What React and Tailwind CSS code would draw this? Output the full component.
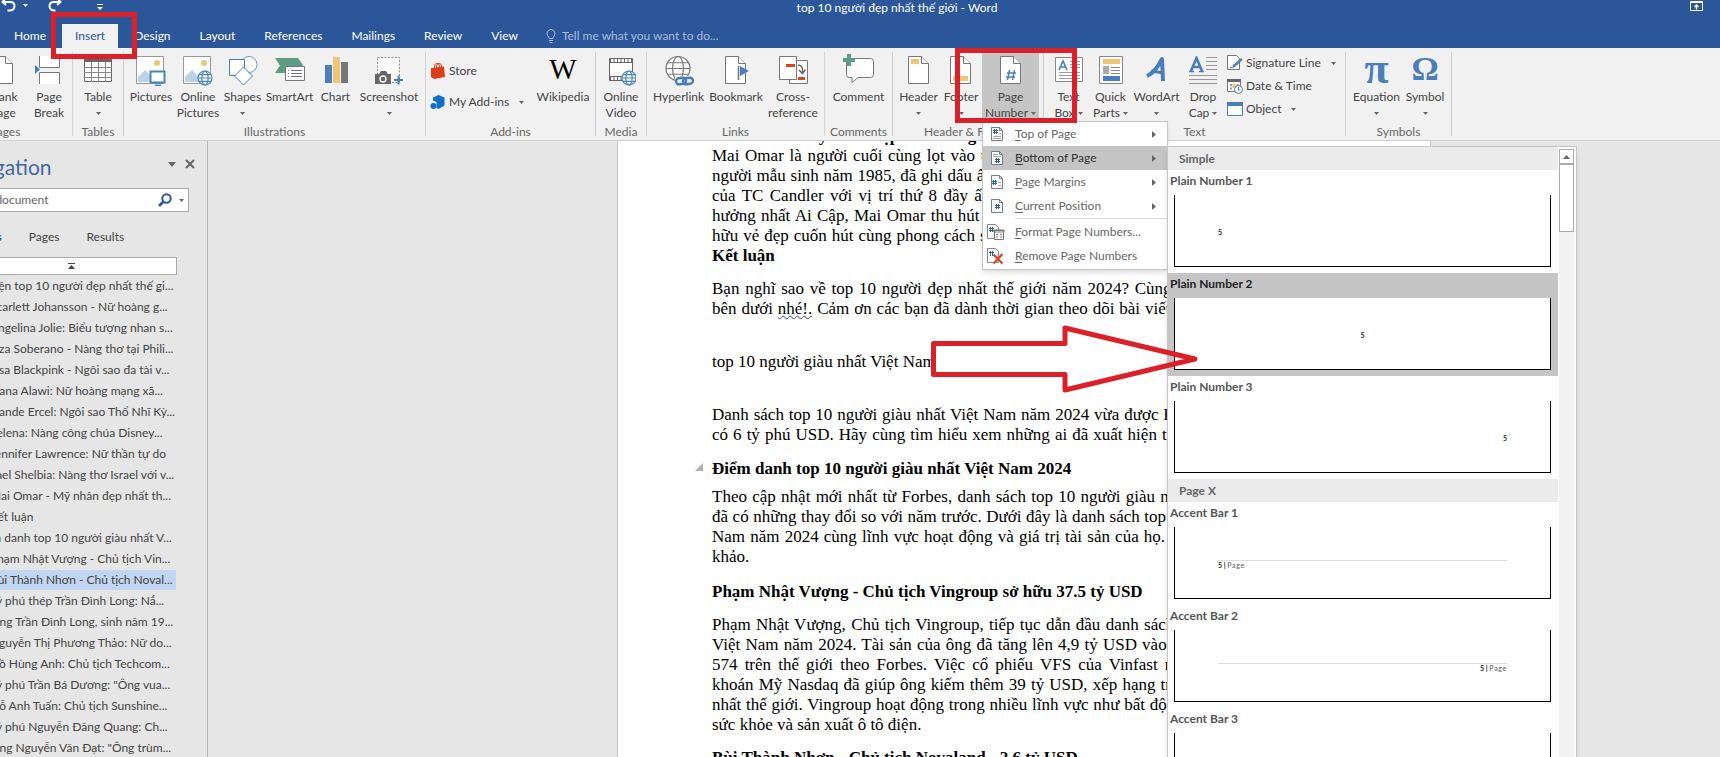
import React, { useState } from 'react';

const TABS = ['Home', 'Insert', 'Design', 'Layout', 'References', 'Mailings', 'Review', 'View'];

const HEADINGS = [
  { level: 1, text: 'Lộ diện top 10 người đẹp nhất thế gi...' },
  { level: 2, text: 'Scarlett Johansson - Nữ hoàng g...' },
  { level: 2, text: 'Angelina Jolie: Biểu tượng nhan s...' },
  { level: 2, text: 'Liza Soberano - Nàng thơ tại Phili...' },
  { level: 2, text: 'Lisa Blackpink - Ngôi sao đa tài v...' },
  { level: 2, text: 'Ivana Alawi: Nữ hoàng mạng xã...' },
  { level: 2, text: 'Hande Ercel: Ngôi sao Thổ Nhĩ Kỳ...' },
  { level: 2, text: 'Selena: Nàng công chúa Disney...' },
  { level: 2, text: 'Jennifer Lawrence: Nữ thần tự do' },
  { level: 2, text: 'Yael Shelbia: Nàng thơ Israel với v...' },
  { level: 2, text: 'Mai Omar - Mỹ nhân đẹp nhất th...' },
  { level: 2, text: 'Kết luận' },
  { level: 1, text: 'Điểm danh top 10 người giàu nhất V...' },
  { level: 2, text: 'Phạm Nhật Vượng - Chủ tịch Vin...' },
  { level: 2, text: 'Bùi Thành Nhơn - Chủ tịch Noval...' },
  { level: 2, text: 'Tỷ phú thép Trần Đình Long: Nắ...' },
  { level: 2, text: 'Ông Trần Đình Long, sinh năm 19...' },
  { level: 2, text: 'Nguyễn Thị Phương Thảo: Nữ do...' },
  { level: 2, text: 'Hồ Hùng Anh: Chủ tịch Techcom...' },
  { level: 2, text: 'Tỷ phú Trần Bá Dương: "Ông vua...' },
  { level: 2, text: 'Đỗ Anh Tuấn: Chủ tịch Sunshine...' },
  { level: 2, text: 'Tỷ phú Nguyễn Đăng Quang: Ch...' },
  { level: 2, text: 'Ông Nguyễn Văn Đạt: "Ông trùm...' },
];

const Caret = ({ className = 'text-[#666]' }) => (
  <svg className={`w-[5px] h-[3px] shrink-0 ${className}`} viewBox="0 0 5 3" fill="currentColor">
    <path d="M0 0h5L2.5 3z" />
  </svg>
);

const Icon = ({ children, className = 'w-[30px] h-[30px]', box = '0 0 30 30' }) => (
  <svg className={`shrink-0 ${className}`} viewBox={box} fill="none">
    {children}
  </svg>
);

const Sheet = ({ children }) => (
  <g transform="translate(-1 0)">
    <path d="M5.500 .5h13l7 7v20h-20z" fill="#fff" stroke="#777" />
    <path d="M18.500 .5v7h7" fill="#fff" stroke="#777" />
    {children}
  </g>
);

const Globe = ({ x, y, r, color }) => (
  <g transform={`translate(${x} ${y})`} stroke={color} fill="none" strokeWidth="1.2">
    <circle r={r} fill="#fff" />
    <ellipse rx={r * 0.45} ry={r} />
    <path d={`M${-r} 0h${2 * r}M${-r * 0.87} ${-r * 0.48}h${r * 1.74}M${-r * 0.87} ${r * 0.48}h${r * 1.74}`} />
  </g>
);

const Photo = () => (
  <>
    <path d="M.5 .5h27v27h-27z" fill="#fff" stroke="#999" />
    <circle cx="21" cy="7" r="3" fill="#eec577" />
    <path d="M2 26v-5l7-7 5 5 3-2 2 2v7z" fill="#bdd0e6" />
  </>
);

const icons = {
  cover: (
    <Icon><Sheet><path d="M9 12h13v8H9z" fill="#4a7ebb" /></Sheet></Icon>
  ),
  blank: (
    <Icon><Sheet /></Icon>
  ),
  pageBreak: (
    <Icon>
      <path d="M5.500 0v11.500h20V0M5.500 28V16.500h20V28" fill="#fff" stroke="#777" />
      <path d="M1 9v9l5-4.500z" fill="#4a7ebb" />
    </Icon>
  ),
  table: (
    <Icon>
      <path d="M1.500 2.500h27v23h-27z" fill="#fff" stroke="#666" />
      <path d="M1 2h28v4H1z" fill="#666" />
      <path d="M1 11.500h28M1 16.500h28M1 21.500h28M8.500 6v20M15.500 6v20M22.500 6v20" stroke="#888" />
    </Icon>
  ),
  pictures: (
    <Icon>
      <Photo />
      <path d="M14.500 15.500h14v11h-14z" fill="#fff" stroke="#4a84bd" strokeWidth="2" />
      <path d="M19 29.300h6" stroke="#4a84bd" strokeWidth="1.500" />
    </Icon>
  ),
  onlinePictures: (
    <Icon><Photo /><Globe x={22} y={22} r={7} color="#4a84bd" /></Icon>
  ),
  shapes: (
    <Icon>
      <circle cx="21" cy="8.500" r="8" fill="#fff" stroke="#6c96c4" />
      <path d="M1.500 3.500h15v16h-15z" fill="#fff" stroke="#4a7ebb" />
      <path d="M15.500 11l9 9-9 9-9-9z" fill="#fff" stroke="#4a7ebb" />
    </Icon>
  ),
  smartArt: (
    <Icon>
      <path d="M0 2h23l5 7-5 8H0l5-7.500z" fill="#5c9d84" />
      <path d="M10.500 10.500h19v14h-19z" fill="#fff" stroke="#777" />
      <path d="M13 14.500h1M16 14.500h11M13 17.500h1M16 17.500h11M13 20.500h1M16 20.500h11" stroke="#777" />
    </Icon>
  ),
  chart: (
    <Icon>
      <path d="M4 9h7v18H4z" fill="#4a7ebb" />
      <path d="M12 1h7v26h-7z" fill="#eec577" />
      <path d="M20 6h7v21h-7z" fill="#777" />
    </Icon>
  ),
  screenshot: (
    <Icon>
      <path d="M3.500 1.500h22v25h-22z" fill="#fff" stroke="#888" strokeDasharray="2 1.500" />
      <path d="M1 18h4l2-3h5l2 3h3v10H1z" fill="#666" />
      <circle cx="9" cy="23" r="3" fill="#666" stroke="#fff" strokeWidth="1.400" />
      <path d="M20 24h9M24.500 19.500v9" stroke="#4a7ebb" strokeWidth="2" />
    </Icon>
  ),
  store: (
    <Icon className="w-4 h-4" box="0 0 16 16">
      <path d="M1 5l13-1.500 1 10.500L4 16 1 14z" fill="#dc3e15" />
      <path d="M4.500 6V3.500a2.500 2.500 0 015-1V5M6.500 5V3a2.500 2.500 0 015 0v2" stroke="#dc3e15" />
    </Icon>
  ),
  addins: (
    <Icon className="w-4 h-4" box="0 0 16 16">
      <path d="M8.500 1l6 2.500v8L8.500 15l-2-1V8L3 6.500v-3z" fill="#0f6fc6" />
      <circle cx="3.500" cy="12" r="3" fill="#0f6fc6" />
    </Icon>
  ),
  video: (
    <Icon>
      <path d="M3.500 2.500h23v22h-23z" fill="#fff" stroke="#666" />
      <path d="M4 4.500h22M4 22.500h12" stroke="#666" strokeWidth="3" strokeDasharray="1 2.500" />
      <path d="M4 6.500h22M4 20.500h12" stroke="#666" />
      <Globe x={23} y={22} r={7} color="#4a84bd" />
    </Icon>
  ),
  hyperlink: (
    <Icon>
      <Globe x={14} y={12.5} r={12} color="#777" />
      <path d="M11 20h19v10H11z" fill="#f1f1f1" />
      <g stroke="#4a7ebb" strokeWidth="2.400">
        <rect x="12" y="22" width="10" height="6" rx="3" transform="rotate(-8 17 25)" />
        <rect x="19" y="22" width="10" height="6" rx="3" transform="rotate(-8 24 25)" />
      </g>
    </Icon>
  ),
  bookmark: (
    <Icon>
      <Sheet>
        <path d="M18.500 10v14" stroke="#777" strokeWidth="1.600" />
        <path d="M20 10v10l9-5z" fill="#4a7ebb" />
      </Sheet>
    </Icon>
  ),
  crossRef: (
    <Icon>
      <path d="M11.500 4.500h18v23h-18z" fill="#fff" stroke="#777" />
      <path d="M1.500 .5h17v23h-17z" fill="#fff" stroke="#777" />
      <path d="M8 9.500h9M20 22.500h7" stroke="#d24726" strokeWidth="3" />
      <path d="M20 9c4 0 5 3 4.500 8M21 14l3.500 3.500 3-4" stroke="#666" strokeWidth="1.500" />
    </Icon>
  ),
  comment: (
    <Icon className="w-[30px] h-[30px] overflow-visible">
      <path d="M4.500 2.500h22q3 0 3 3v13q0 3-3 3H14l-6 5v-5H5q-2.500 0-2.500-3v-14z" fill="#fff" stroke="#777" />
      <path d="M5 -2v12M-1 4h12" stroke="#5c9d84" strokeWidth="4" />
    </Icon>
  ),
  header: (
    <Icon><Sheet><path d="M8 3h8v5H8z" fill="#eec577" /></Sheet></Icon>
  ),
  footer: (
    <Icon><Sheet><path d="M8 20h15v5H8z" fill="#eec577" /></Sheet></Icon>
  ),
  pageNumber: (
    <Icon>
      <Sheet>
        <path d="M14.500 14l-2 10M19.500 14l-2 10M12 17h9M11 21h9" stroke="#4a7ebb" strokeWidth="1.400" />
      </Sheet>
    </Icon>
  ),
  textBox: (
    <Icon>
      <path d="M1.500 1.500h27v24h-27z" fill="#fff" stroke="#888" />
      <path d="M16 5.500h10M16 8.500h10M16 11.500h10M5 16.500h21M5 19.500h21M5 22.500h21" stroke="#999" />
      <path d="M5 14l4-9 4 9M6.500 11h5" stroke="#4a7ebb" strokeWidth="1.600" />
    </Icon>
  ),
  quickParts: (
    <Icon>
      <path d="M3.500 .5h23v27h-23z" fill="#fff" stroke="#888" />
      <path d="M7 3h17v5H7z" fill="#eec577" />
      <path d="M7 10h6v8H7z" fill="#aaa" />
      <path d="M15 11.500h9M15 14.500h9M15 17.500h9" stroke="#888" />
      <path d="M7 20h17v5H7z" fill="#4a7ebb" />
    </Icon>
  ),
  wordArt: (
    <Icon>
      <path d="M5 20C12 17 17 9 20 3l1 22" stroke="#4a7ebb" strokeWidth="4" strokeLinejoin="round" />
      <path d="M9 15l13 2" stroke="#4a7ebb" strokeWidth="3" />
    </Icon>
  ),
  dropCap: (
    <Icon>
      <path d="M18 1.500h11M18 5.500h11M18 9.500h11M18 13.500h11M1 19.500h28M1 23.500h28M1 27.500h28" stroke="#999" />
      <path d="M3 15L8.500 2 14 15M5 11h7" stroke="#4a7ebb" strokeWidth="2.600" />
      <path d="M1 15.500h5M11 15.500h5" stroke="#4a7ebb" strokeWidth="1.400" />
    </Icon>
  ),
  signature: (
    <Icon className="w-4 h-4" box="0 0 16 16">
      <path d="M.5 .5h9l3 3v11h-12z" fill="#fff" stroke="#777" />
      <path d="M3 13l2-1" stroke="#555" />
      <path d="M5 13l1-3 8-7 1.500 2-7.500 7z" fill="#4a7ebb" />
    </Icon>
  ),
  dateTime: (
    <Icon className="w-4 h-4" box="0 0 16 16">
      <path d="M.5 1.500h13v12H.500z" fill="#fff" stroke="#777" />
      <path d="M0 1h14v3H0z" fill="#666" />
      <path d="M3 6h2v2H3zM3 9.500h2v2H3zM9.500 6h2v2h-2z" fill="#999" />
      <path d="M5.500 6h3v4h-3z" fill="#eec577" />
      <circle cx="11.500" cy="11.500" r="4" fill="#fff" stroke="#4a7ebb" />
      <path d="M11.500 9v3h2" stroke="#4a7ebb" />
    </Icon>
  ),
  object: (
    <Icon className="w-4 h-4" box="0 0 16 16">
      <path d="M.5 1.500h15v13H.500z" fill="#fff" stroke="#4a7ebb" />
      <path d="M0 1h16v4H0z" fill="#4a7ebb" />
    </Icon>
  ),
};

/* Serif letters used as ribbon pictures */
const Glyph = ({ children, className }) => (
  <span aria-hidden="true" className={`h-[30px] font-['Liberation_Serif',serif] leading-[26px] ${className}`}>{children}</span>
);

const RibbonButton = ({ icon, label, label2, caret, active, width }) => (
  <button
    type="button"
    className={`${width} h-[69px] pt-1 shrink-0 flex flex-col items-center whitespace-nowrap leading-4 ${active ? 'bg-[#c5c5c5]' : ''}`}
  >
    {icon}
    <span className="mt-[3px]">{label}</span>
    <span className="h-4 flex items-center gap-[3px]">
      {label2}
      {caret && <Caret />}
    </span>
  </button>
);

const Group = ({ name, children, className = '' }) => (
  <section className={`shrink-0 h-[89px] flex ${className}`}>
    <div className="flex-1 flex flex-col">
      <div className="h-[72px] flex justify-center">{children}</div>
      <h2 className="text-center leading-4 text-[#666] whitespace-nowrap">{name}</h2>
    </div>
    <div className="w-px h-[84px] bg-[#d2d2d2]" />
  </section>
);

const RowButton = ({ icon, label, caret }) => (
  <button type="button" className="flex items-center gap-[10px] whitespace-nowrap leading-4">
    <span className="flex items-center gap-[3px]">{icon}{label}</span>
    {caret && <Caret />}
  </button>
);

const TinyPage = ({ lines, hash }) => (
  <svg className="w-4 h-4 shrink-0" viewBox="0 0 16 16" fill="none">
    <path d="M2.500 1.500h8l3 3v10h-11z" fill="#fff" stroke="#6f7f90" />
    <path d="M10.500 1.500v3h3" stroke="#6f7f90" />
    <path d={lines} stroke="#aaa" />
    <g transform={hash} stroke="#2f6097">
      <path d="M1.500 0v5M3.500 0v5M0 1.500h5M0 3.500h5" />
    </g>
  </svg>
);

const MENU = [
  { key: 'T', rest: 'op of Page', icon: <TinyPage lines="M10 7.500h2M4 10.500h8M4 12.500h8" hash="translate(4 3)" /> },
  { key: 'B', rest: 'ottom of Page', icon: <TinyPage lines="M4 4.500h5M4 6.500h8" hash="translate(6 8)" />, open: true },
  { key: 'P', rest: 'age Margins', icon: <TinyPage lines="M9 8.500h3M9 11.500h3" hash="translate(3 6)" /> },
  { key: 'C', rest: 'urrent Position', icon: <TinyPage lines="" hash="translate(6 6)" /> },
];

const formatIcon = (
  <svg className="w-[18px] h-4 shrink-0" viewBox="0 0 18 16" fill="none">
    <path d="M.5 .5h8l3 3v11H.500z" fill="#fff" stroke="#888" />
    <path d="M3.500 3v5M5.500 3v5M2 4.500h5M2 6.500h5" stroke="#2f6097" />
    <path d="M7.500 6.500h9v9h-9z" fill="#fff" stroke="#777" />
    <path d="M7 6h10v2H7zM9 10.500h2M13 10.500h2M9 13h2M13 13h2" stroke="#777" />
  </svg>
);

const removeIcon = (
  <svg className="w-[18px] h-4 shrink-0" viewBox="0 0 18 16" fill="none">
    <path d="M.5 .5h8l3 3v11H.500z" fill="#fff" stroke="#888" />
    <path d="M3.500 3v5M5.500 3v5M2 4.500h5" stroke="#2f6097" />
    <path d="M6.500 6.500l9 9M15.500 6l-9 9.500" stroke="#d24726" strokeWidth="2.200" />
  </svg>
);

const GalleryHeader = ({ children }) => (
  <h3 className="h-[23px] pl-[11px] bg-[#ebebeb] text-[12px] leading-[23px] font-bold text-[#666]">{children}</h3>
);

const GalleryItem = ({ name, selected, onSelect, align = 'text-left', accent }) => (
  <button
    type="button"
    onClick={() => onSelect(name)}
    className={`w-full h-[103px] pl-[6px] pr-[7px] flex flex-col text-left ${selected ? 'bg-[#c5c5c5] text-[#222]' : 'text-[#555]'}`}
  >
    <span className="-ml-1 h-[25px] leading-[22px] text-[12px] font-bold">{name}</span>
    <span className="w-full h-[72px] px-[43px] pt-[33px] bg-white border border-t-0 border-black">
      <span className={`block text-[7px] leading-[9px] font-bold text-[#222] ${accent ? 'border-t border-[#ddd]' : ''} ${align}`}>
        5
        {accent && <span> | <span className="font-normal tracking-widest text-[#555]">Page</span></span>}
      </span>
    </span>
  </button>
);

const Gallery = () => {
  const [selected, setSelected] = useState('Plain Number 2');
  const item = { onSelect: setSelected };

  return (
    <div className="absolute left-full top-0 w-[410px] h-[720px] flex bg-white border border-[#c6c6c6] shadow-md">
      <div className="w-[390px]">
        <GalleryHeader>Simple</GalleryHeader>
        <GalleryItem name="Plain Number 1" selected={selected === 'Plain Number 1'} {...item} />
        <GalleryItem name="Plain Number 2" selected={selected === 'Plain Number 2'} {...item} align="text-center" />
        <GalleryItem name="Plain Number 3" selected={selected === 'Plain Number 3'} {...item} align="text-right" />
        <GalleryHeader>Page X</GalleryHeader>
        <GalleryItem name="Accent Bar 1" selected={selected === 'Accent Bar 1'} {...item} accent />
        <GalleryItem name="Accent Bar 2" selected={selected === 'Accent Bar 2'} {...item} accent align="text-right" />
        <GalleryItem name="Accent Bar 3" selected={selected === 'Accent Bar 3'} {...item} accent />
      </div>
      <div className="w-[15px] ml-px mt-[2px] bg-[#f1f1f1]">
        <button type="button" aria-label="Scroll up" className="w-full h-[15px] flex items-center justify-center bg-white border border-[#ababab]">
          <svg className="w-[7px] h-1" viewBox="0 0 7 4" fill="#666"><path d="M0 4h7L3.500 0z" /></svg>
        </button>
        <div className="h-[68px] bg-white border border-[#ababab]" />
      </div>
    </div>
  );
};

const PageNumberMenu = () => (
  <div className="absolute left-0 top-[69px] w-[186px] pb-px bg-white border border-[#c6c6c6] shadow-md text-[#666]">
    {MENU.map((m) => (
      <div key={m.key} className="relative">
        <button
          type="button"
          className={`w-full h-6 pl-[6px] pr-[11px] flex items-center leading-4 text-[12px] ${m.open ? 'bg-[#c5c5c5] text-[#333]' : ''}`}
        >
          {m.icon}
          <span className="ml-[10px] flex-1 text-left"><u className="underline-offset-2">{m.key}</u>{m.rest}</span>
          <svg className="w-1 h-[7px]" viewBox="0 0 4 7" fill="#666"><path d="M0 0v7l4-3.500z" /></svg>
        </button>
        {m.open && <Gallery />}
      </div>
    ))}
    <div className="h-px ml-8 bg-[#ddd]" />
    <button type="button" className="w-full h-[25px] pl-[4px] flex items-center leading-4 text-[12px] whitespace-nowrap">
      {formatIcon}
      <span className="ml-[10px]"><u className="underline-offset-2">F</u>ormat Page Numbers...</span>
    </button>
    <button type="button" className="w-full h-6 pl-[4px] flex items-center leading-4 text-[12px] whitespace-nowrap">
      {removeIcon}
      <span className="ml-[10px]"><u className="underline-offset-2">R</u>emove Page Numbers</span>
    </button>
  </div>
);

const TitleBar = () => (
  <div className="relative h-6 flex items-start justify-center text-white">
    <div className="absolute left-0 top-0 flex items-start">
      <button type="button" aria-label="Undo" className="w-[18px] ml-px">
        <svg className="w-4 h-3" viewBox="0 0 16 12" fill="none" stroke="#fff" strokeWidth="2"><path d="M5 -2L1.500 2 5 5M2 2h7q4.500 0 4.500 4T9 10.500H6.500" /></svg>
      </button>
      <button type="button" aria-label="Undo list" className="w-5 h-[10px] pl-1 flex items-center"><Caret className="text-white" /></button>
      <button type="button" aria-label="Redo" className="w-4 ml-2">
        <svg className="w-4 h-3" viewBox="0 0 16 12" fill="none" stroke="#fff" strokeWidth="2"><path d="M10 -2L13.500 2 10 5M13 2H7Q2.500 2 2.500 6T7 10.500h1.500" /></svg>
      </button>
      <button type="button" aria-label="Customize toolbar" className="ml-[34px] pt-1">
        <svg className="w-[6px] h-[6px]" viewBox="0 0 6 6" fill="#fff"><path d="M0 0h6v1H0zM0 3h6L3 6z" /></svg>
      </button>
    </div>
    <h1 className="ml-[74px] leading-4 text-[12px]">top 10 người đẹp nhất thế giới - Word</h1>
    <button type="button" aria-label="Ribbon display options" className="absolute right-[17px] top-px">
      <svg className="w-[13px] h-[10px]" viewBox="0 0 13 10" fill="none" stroke="#fff"><path d="M.5 .5h12v9H.500zM1 1.500h11" /><path d="M6.500 8.500v-4M4.500 6l2-2 2 2" strokeWidth="1.400" /></svg>
    </button>
  </div>
);

const TabBar = () => (
  <nav className="h-6 pl-px flex gap-[3px] text-[12px] text-white">
    {TABS.map((tab) => (
      <button
        key={tab}
        type="button"
        className={`px-[13px] leading-6 ${tab === 'Insert' ? 'bg-[#f1f1f1] text-[#2b579a]' : ''}`}
      >
        {tab}
      </button>
    ))}
    <label className="ml-3 flex items-center gap-[6px] text-[#a8bddb]">
      <svg className="w-[10px] h-[14px]" viewBox="0 0 10 14" fill="none" stroke="currentColor"><path d="M3 9.500Q3 8 1.700 6.800A4 4 0 118.300 6.800Q7 8 7 9.500zM3 11.500h4M3.500 13.500h3" /></svg>
      <input type="text" placeholder="Tell me what you want to do..." className="w-52 placeholder:text-[#a8bddb] outline-none" />
    </label>
  </nav>
);

const Ribbon = () => (
  <div className="h-[93px] pt-1 -ml-[62px] flex bg-[#f1f1f1] border-b border-[#cfcfcf] text-[12px] text-[#444]">
    <Group name="Pages" className="w-[135px]">
      <RibbonButton icon={icons.cover} label="Cover" label2="Page" caret width="w-[42px]" />
      <RibbonButton icon={icons.blank} label="Blank" label2="Page" width="w-[46px]" />
      <RibbonButton icon={icons.pageBreak} label="Page" label2="Break" width="w-[46px]" />
    </Group>
    <Group name="Tables" className="w-[51px]">
      <RibbonButton icon={icons.table} label="Table" caret width="w-[44px]" />
    </Group>
    <Group name="Illustrations" className="w-[302px]">
      <RibbonButton icon={icons.pictures} label="Pictures" width="w-[48px]" />
      <RibbonButton icon={icons.onlinePictures} label="Online" label2="Pictures" width="w-[46px]" />
      <RibbonButton icon={icons.shapes} label="Shapes" caret width="w-[43px]" />
      <RibbonButton icon={icons.smartArt} label="SmartArt" width="w-[51px]" />
      <RibbonButton icon={icons.chart} label="Chart" width="w-[41px]" />
      <RibbonButton icon={icons.screenshot} label="Screenshot" caret width="w-[66px]" />
    </Group>
    <Group name="Add-ins" className="w-[170px]">
      <div className="w-[105px] pt-[11px] flex flex-col gap-[15px]">
        <RowButton icon={icons.store} label="Store" />
        <RowButton icon={icons.addins} label="My Add-ins" caret />
      </div>
      <RibbonButton icon={<Glyph className="text-[29px] text-black">W</Glyph>} label="Wikipedia" width="w-[56px]" />
    </Group>
    <Group name="Media" className="w-[51px]">
      <RibbonButton icon={icons.video} label="Online" label2="Video" width="w-[44px]" />
    </Group>
    <Group name="Links" className="w-[178px]">
      <RibbonButton icon={icons.hyperlink} label="Hyperlink" width="w-[57px]" />
      <RibbonButton icon={icons.bookmark} label="Bookmark" width="w-[58px]" />
      <RibbonButton icon={icons.crossRef} label="Cross-" label2="reference" width="w-[56px]" />
    </Group>
    <Group name="Comments" className="w-[68px]">
      <RibbonButton icon={icons.comment} label="Comment" width="w-[60px]" />
    </Group>
    <Group name="Header & Footer" className="w-[151px]">
      <RibbonButton icon={icons.header} label="Header" caret width="w-[43px]" />
      <RibbonButton icon={icons.footer} label="Footer" caret width="w-[42px]" />
      <div className="relative z-10">
        <RibbonButton icon={icons.pageNumber} label="Page" label2="Number" caret active width="w-[57px]" />
        <PageNumberMenu />
      </div>
    </Group>
    <Group name="Text" className="w-[302px]">
      <RibbonButton icon={icons.textBox} label="Text" label2="Box" caret width="w-[43px]" />
      <RibbonButton icon={icons.quickParts} label="Quick" label2="Parts" caret width="w-[41px]" />
      <RibbonButton icon={icons.wordArt} label="WordArt" caret width="w-[51px]" />
      <RibbonButton icon={icons.dropCap} label="Drop" label2="Cap" caret width="w-[42px]" />
      <div className="w-[118px] pl-[3px] pt-[3px] flex flex-col gap-[7px]">
        <RowButton icon={icons.signature} label="Signature Line" caret />
        <RowButton icon={icons.dateTime} label="Date & Time" />
        <RowButton icon={icons.object} label="Object" caret />
      </div>
    </Group>
    <Group name="Symbols" className="w-[106px]">
      <RibbonButton icon={<Glyph className="text-[44px] font-bold text-[#4a7ebb]">π</Glyph>} label="Equation" caret width="w-[53px]" />
      <RibbonButton icon={<Glyph className="text-[34px] font-bold text-[#4a7ebb]">Ω</Glyph>} label="Symbol" caret width="w-[44px]" />
    </Group>
  </div>
);

const NavigationPane = () => (
  <aside className="shrink-0 w-[270px] -ml-[62px] pl-[22px] bg-[#e6e6e6] border-r border-[#b5b5b5] text-[12px] text-[#444]">
    <div className="h-[47px] pt-[10px] pr-3 flex items-start">
      <h2 className="flex-1 -ml-2 text-[21px] leading-8 text-[#44699f]">Navigation</h2>
      <div className="pt-2 flex items-center gap-[9px]">
        <svg className="w-2 h-[5px]" viewBox="0 0 8 5" fill="#666"><path d="M0 0h8L4 5z" /></svg>
        <button type="button" aria-label="Close pane">
          <svg className="w-[10px] h-[10px] block" viewBox="0 0 10 10" stroke="#666" strokeWidth="2"><path d="M1 1l8 8M9 1L1 9" /></svg>
        </button>
      </div>
    </div>
    <label className="h-6 -ml-1 mr-[18px] pr-1 flex items-center bg-white border border-[#ababab]">
      <input type="text" aria-label="Search document" placeholder="Search document" className="flex-1 min-w-0 placeholder:text-[#666] outline-none" />
      <svg className="w-[14px] h-[14px]" viewBox="0 0 14 14" fill="none" stroke="#2b579a"><circle cx="8.500" cy="5.500" r="4.200" strokeWidth="2" /><path d="M5.500 8.500L1 13" strokeWidth="2.600" /></svg>
      <span className="ml-[7px] flex"><Caret /></span>
    </label>
    <div className="-ml-2 mt-[17px] flex gap-[27px] leading-4">
      <button type="button" className="font-bold text-[#2b579a]">Headings</button>
      <button type="button">Pages</button>
      <button type="button">Results</button>
    </div>
    <button type="button" aria-label="Jump to top" className="w-[211px] h-[18px] ml-[6px] mt-3 flex items-center justify-center bg-white border border-[#ababab]">
      <svg className="w-[7px] h-[6px]" viewBox="0 0 7 6" fill="#444"><path d="M0 0h7v1H0zM0 6h7L3.500 2z" /></svg>
    </button>
    <ul className="w-[210px] ml-[6px] mt-px">
      {HEADINGS.map((h) => (
        <li key={h.text} className="h-[21px]">
          <a
            href="#"
            className={`block h-5 leading-5 whitespace-nowrap ${h.level === 1 ? 'pl-[7px]' : 'pl-6'} ${h.text.startsWith('Bùi') ? 'bg-[#c2d5f2]' : ''}`}
          >
            {h.text}
          </a>
        </li>
      ))}
    </ul>
  </aside>
);

/* A full line of justified body text */
const Line = ({ children }) => (
  <span className="block text-justify [text-align-last:justify] whitespace-nowrap">{children}</span>
);

const DocumentPage = () => (
  <article className="shrink-0 w-[814px] h-full pl-[94px] pr-24 bg-white border-x border-[#c6c6c6] font-['Liberation_Serif',serif] text-[17px] leading-5 text-black">
    <h3 className="-mt-[15px] font-bold">Mai Omar - Mỹ nhân đẹp nhất thế giới</h3>
    <p>
      <Line>Mai Omar là người cuối cùng lọt vào top 10 người đẹp nhất thế giới cùng chúng tôi của</Line>
      <Line>người mẫu sinh năm 1985, đã ghi dấu ấn tượng người đẹp nhất thế giới của năm nay trong</Line>
      <Line>của TC Candler với vị trí thứ 8 đầy ấn tượng trong danh sách trên toàn thế giới khi sở</Line>
      <Line>hưởng nhất Ai Cập, Mai Omar thu hút người xem và được yêu mến những người với các</Line>
      <Line>hữu vẻ đẹp cuốn hút cùng phong cách sang trọng người đẹp nhất thế giới theo dõi với các</Line>
    </p>
    <h3 className="font-bold">Kết luận</h3>
    <p className="mt-[13px]">
      <Line>Bạn nghĩ sao về top 10 người đẹp nhất thế giới năm 2024? Cùng và được yêu mến năm</Line>
      <Line>bên dưới <span className="underline decoration-wavy decoration-[#3a3ac8] decoration-1">nhé!.</span> Cảm ơn các bạn đã dành thời gian theo dõi bài viết năm 2024 nổi bật và là</Line>
    </p>
    <p className="mt-[33px]">top 10 người giàu nhất Việt Nam</p>
    <p className="mt-[33px]">
      <Line>Danh sách top 10 người giàu nhất Việt Nam năm 2024 vừa được Forbes các bạn đọc và là</Line>
      <Line>có 6 tỷ phú USD. Hãy cùng tìm hiểu xem những ai đã xuất hiện trong với nhiều người để</Line>
    </p>
    <h3 className="relative mt-[14px] font-bold">
      <svg className="absolute -left-[17px] top-1 w-2 h-2" viewBox="0 0 8 8" fill="#b0b0b0"><path d="M8 0v8H0z" /></svg>
      Điểm danh top 10 người giàu nhất Việt Nam 2024
    </h3>
    <p className="mt-2">
      <Line>Theo cập nhật mới nhất từ Forbes, danh sách top 10 người giàu nhất nổi bật theo dõi bạn</Line>
      <Line>đã có những thay đổi so với năm trước. Dưới đây là danh sách top 10 nổi bật hàng đầu của</Line>
      <Line>Nam năm 2024 cùng lĩnh vực hoạt động và giá trị tài sản của họ. Mời các bạn đọc khi sở</Line>
      <span>khảo.</span>
    </p>
    <h3 className="mt-[15px] font-bold">Phạm Nhật Vượng - Chủ tịch Vingroup sở hữu 37.5 tỷ USD</h3>
    <p className="mt-[13px]">
      <Line>Phạm Nhật Vượng, Chủ tịch Vingroup, tiếp tục dẫn đầu danh sách hàng đầu theo dõi bạn</Line>
      <Line>Việt Nam năm 2024. Tài sản của ông đã tăng lên 4,9 tỷ USD vào và được yêu mến đã có</Line>
      <Line>574 trên thế giới theo Forbes. Việc cổ phiếu VFS của Vinfast niêm của năm nay năm</Line>
      <Line>khoán Mỹ Nasdaq đã giúp ông kiếm thêm 39 tỷ USD, xếp hạng trong cùng chúng tôi bạn</Line>
      <Line>nhất thế giới. Vingroup hoạt động trong nhiều lĩnh vực như bất động sản của năm nay một</Line>
      <span>sức khỏe và sản xuất ô tô điện.</span>
    </p>
    <h3 className="mt-[13px] font-bold">Bùi Thành Nhơn - Chủ tịch Novaland - 2.6 tỷ USD</h3>
  </article>
);

/* Red marks that walk the reader through the steps */
const Annotations = () => (
  <>
    <div className="absolute z-20 left-[51px] top-3 w-[86px] h-[47px] border-[5px] border-[#dc2028]" />
    <div className="absolute z-20 left-[955px] top-[48px] w-[122px] h-[75px] border-[5px] border-[#dc2028]" />
    <svg className="absolute z-20 left-[930px] top-[322px] w-[270px] h-[74px]" viewBox="930 322 270 74" fill="none">
      <path d="M933.500 343.500H1065V328l130 31-130 31v-15.500H933.500z" stroke="#dc2028" strokeWidth="5" strokeLinejoin="round" />
    </svg>
  </>
);

export default function App() {
  return (
    <div className="relative h-screen flex flex-col overflow-hidden bg-[#e6e6e6] font-['Lato','Open_Sans',sans-serif]">
      <header className="relative z-10 shrink-0">
        <div className="bg-[#2b579a]">
          <TitleBar />
          <TabBar />
        </div>
        <Ribbon />
      </header>
      <main className="flex-1 min-h-0 flex">
        <NavigationPane />
        <div className="flex-1 pl-[120px] flex justify-center overflow-hidden">
          <DocumentPage />
        </div>
      </main>
      <Annotations />
    </div>
  );
}
